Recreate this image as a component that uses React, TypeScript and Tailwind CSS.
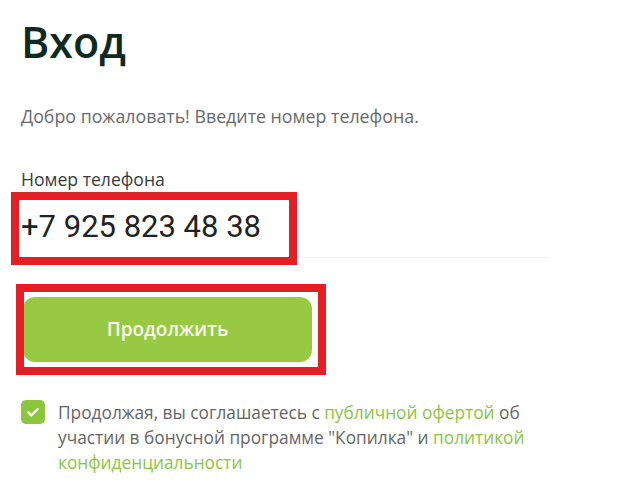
export default function App() {
  return (
    <div className="w-[624px] h-[494px] bg-white font-['Open_Sans',sans-serif] overflow-hidden">
      <div className="pl-[21px] pt-[20px]">
        {/* Title */}
        <h1 className="text-[43px] leading-[43px] font-semibold text-[#0f2a22]">Вход</h1>
        <p className="mt-[41px] text-[17.8px] leading-[24px] text-[#6a6a6a]">
          Добро пожаловать! Введите номер телефона.
        </p>

        {/* Phone */}
        <label className="block mt-[39px] text-[17.6px] leading-[24px] text-[#3a3a3a]">Номер телефона</label>
        <div className="relative w-[529px] pt-[18px] pb-[12px] border-b border-[#efefef]">
          <div className="font-['Roboto',sans-serif] text-[31px] leading-[36px] text-[#222222]">
            <span className="text-[#0f2a22]">+7</span> 925 823 48 38
          </div>
          <div className="absolute -left-[10px] top-[1px] w-[286px] h-[73px] border-[8px] border-[#e31e24]" />
        </div>

        {/* Button */}
        <div className="relative mt-[39px] ml-[2px] w-[289px]">
          <button className="w-[289px] h-[65px] rounded-[12px] bg-[#97c943] text-[#f7faf0] text-[19px] font-semibold">
            Продолжить
          </button>
          <div className="absolute -left-[7px] -top-[13px] w-[310px] h-[91px] border-[8px] border-[#e31e24]" />
        </div>

        {/* Terms */}
        <div className="mt-[38px] flex items-start gap-[13px]">
          <div className="w-6 h-6 shrink-0 rounded-[5px] bg-[#8cc63f] flex items-center justify-center">
            <svg width="16" height="16" viewBox="0 0 24 24" fill="none" stroke="white" strokeWidth="3.5" strokeLinecap="round" strokeLinejoin="round">
              <path d="M5 12.5l4.5 4.5L19 7.5" />
            </svg>
          </div>
          <p className="w-[492px] text-[17.3px] leading-[25px] text-[#666666]">
            Продолжая, вы соглашаетесь с <span className="text-[#8cc63f]">публичной офертой</span> об участии в бонусной
            программе "Копилка" и <span className="text-[#8cc63f]">политикой конфиденциальности</span>
          </p>
        </div>
      </div>
    </div>
  )
}
